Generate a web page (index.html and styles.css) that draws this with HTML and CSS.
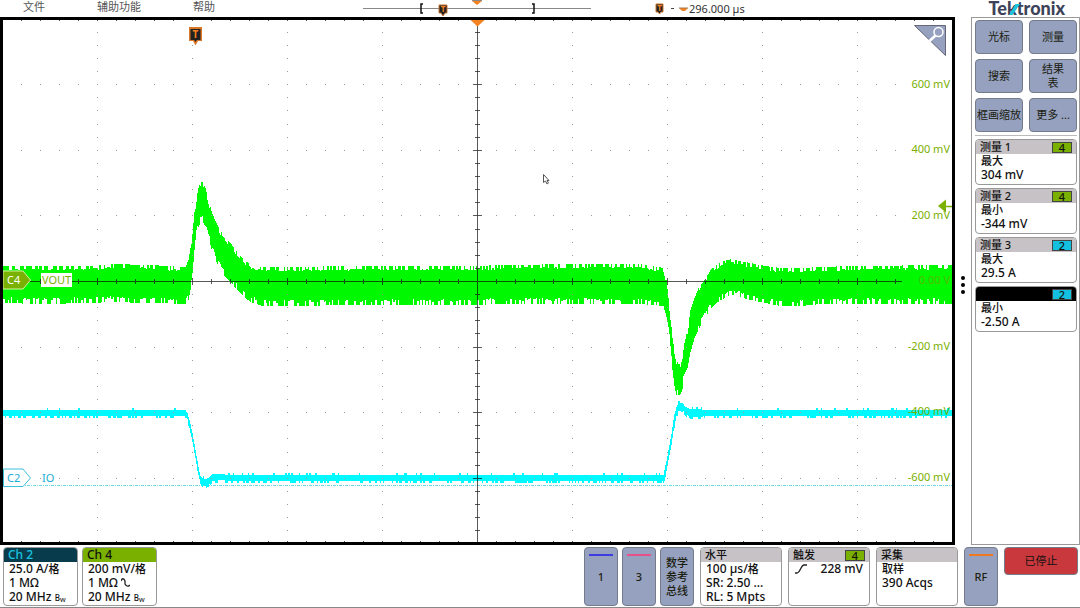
FILE: index.html
```html
<!DOCTYPE html>
<html lang="zh-CN">
<head>
<meta charset="utf-8">
<title>Tektronix</title>
<link rel="stylesheet" href="styles.css">
</head>
<body>
<div class="scope">
  <header class="topbar">
    <nav class="menu">
      <a href="#file">文件</a>
      <a href="#utility">辅助功能</a>
      <a href="#help">帮助</a>
    </nav>
    <svg class="ruler" width="229" height="17" viewBox="0 0 229 17" aria-hidden="true">
      <path d="M0 8.500H228" stroke="#888" fill="none"/>
      <path d="M60 4h-2v9h2M169 4h2v9h-2" stroke="#111" stroke-width="1.500" fill="none"/>
      <path d="M109 1h10l-5 4z" fill="#f58220"/><path d="M109 0.500h10" stroke="#888"/>
      <path d="M76 5h8v8h-2l-2 3-2-3h-2z" fill="#222" stroke="#c87533"/>
      <text x="80" y="12" class="tmark small">T</text>
    </svg>
    <div class="position">
      <svg width="34" height="17" viewBox="0 0 34 17" aria-hidden="true">
        <path d="M1 4h7v8h-2l-1.500 2-1.500-2h-2z" fill="#222" stroke="#c87533"/>
        <text x="4.500" y="11" class="tmark small">T</text>
        <path d="M16 8.500h3" stroke="#444"/>
        <path d="M24 8h9l-3 3h-3z" fill="#f58220"/><path d="M24 8h9" stroke="#a87850"/>
      </svg>
      <span>296.000 µs</span>
    </div>
    <div class="logo">Te<span class="logo-k">k<svg width="11" height="14" viewBox="0 0 11 14" aria-hidden="true"><path d="M0 14L6.500 3H11L3.500 14z" fill="#1cc3dc"/></svg></span>tronix</div>
  </header>

  <main class="screen">
    <svg class="traces" viewBox="3 20 949 522" preserveAspectRatio="none" aria-label="VOUT, IO">
      <path d="M3 485.500H952" class="baseline"/>
      <path id="trace4" class="trace4"/>
      <path id="trace2" class="trace2"/>
      <path id="dots" class="dots"/>
      <path id="axes" class="axes"/>
      <path d="M470.500 20h14l-7 6.500z" fill="#f58220"/>
      <path d="M189 27h13v14H198l-2.500 4.500-2.500-4.500H189z" fill="#d87828"/>
      <path d="M190.500 29h10v11h-10z" fill="#222"/><path d="M193.500 39h4l-2 3z" fill="#222"/>
      <text x="195.500" y="38" class="tmark">T</text>
      <path d="M938 206l8-6.500v13z" fill="#7ab000"/><path d="M946 206.500h6" stroke="#7ab000" stroke-width="1.500"/>
      <path d="M543.500 174.500v8l2-1.500 1.500 3 1.500-1-1.500-2.500h2z" fill="#fff" stroke="#555" stroke-width="1"/>
    </svg>
    <div class="scale">
      <span>600 mV</span><span>400 mV</span><span>200 mV</span><span class="zero">0.00 V</span><span>-200 mV</span><span>-400 mV</span><span>-600 mV</span>
    </div>
    <div class="channel channel4">
      <svg width="28" height="20" viewBox="0 0 28 20" aria-hidden="true"><path d="M0 1H20L27.500 10L20 19H0z" fill="#7ab000" stroke="#d9f0a0"/></svg>
      <b>C4</b><span>VOUT</span>
    </div>
    <div class="channel channel2">
      <svg width="28" height="20" viewBox="0 0 28 20" aria-hidden="true"><path d="M.5 1H20L27.500 10L20 18.500H.5z" fill="#fff" stroke="#3cc0dc"/></svg>
      <b>C2</b><span>IO</span>
    </div>
    <button class="magnify" aria-label="缩放">
      <svg width="32" height="31" viewBox="0 0 32 31"><path d="M.5.500h31v30z" fill="#95a1bf" stroke="#667"/><circle cx="24.500" cy="7" r="4.500" fill="none" stroke="#fff" stroke-width="1.500"/><path d="M21.500 10.500l-6 5.500" stroke="#fff" stroke-width="2.500"/></svg>
    </button>
  </main>

  <div class="grip" aria-hidden="true"><i></i><i></i><i></i></div>

  <aside class="side">
    <div class="tools">
      <button>光标</button><button>测量</button>
      <button>搜索</button><button>结果<br>表</button>
      <button>框画缩放</button><button>更多 ...</button>
    </div>
    <section class="card"><h2>测量 1<span class="badge green">4</span></h2><p><span class="cjk">最大</span></p><p>304 mV</p></section>
    <section class="card"><h2>测量 2<span class="badge green">4</span></h2><p><span class="cjk">最小</span></p><p>-344 mV</p></section>
    <section class="card"><h2>测量 3<span class="badge cyan">2</span></h2><p><span class="cjk">最大</span></p><p>29.5 A</p></section>
    <section class="card"><h2 class="selected"><span class="badge cyan">2</span></h2><p><span class="cjk">最小</span></p><p>-2.50 A</p></section>
  </aside>

  <footer class="bottom">
    <section class="card info ch2"><h2>Ch 2</h2><p>25.0 A/<span class="cjk">格</span></p><p>1 MΩ</p><p>20 MHz <small>B<sub>W</sub></small></p></section>
    <section class="card info ch4"><h2>Ch 4</h2><p>200 mV/<span class="cjk">格</span></p><p>1 MΩ <svg width="9" height="9" viewBox="0 0 9 9" aria-hidden="true"><path d="M0 3C1 0 3 0 4 3V6C5 8 7 9 9 7" fill="none" stroke="#222" stroke-width="1.300"/></svg></p><p>20 MHz <small>B<sub>W</sub></small></p></section>
    <div class="spacer"></div>
    <button class="key key1"><i></i>1</button>
    <button class="key key3"><i></i>3</button>
    <button class="key math">数学<br>参考<br>总线</button>
    <section class="card info setting"><h2>水平</h2><p>100 µs/<span class="cjk">格</span></p><p>SR: 2.50 ...</p><p>RL: 5 Mpts</p></section>
    <section class="card info setting"><h2>触发<span class="badge green">4</span></h2><p class="trigger"><svg width="14" height="10" viewBox="0 0 14 10" aria-hidden="true"><path d="M1 9H3C6 9 7 1 10 1H13" fill="none" stroke="#222" stroke-width="1.300"/></svg>228 mV</p></section>
    <section class="card info setting"><h2>采集</h2><p><span class="cjk">取样</span></p><p>390 Acqs</p></section>
    <button class="key rf"><i></i>RF</button>
    <button class="stop">已停止</button>
  </footer>
</div>
<script src="scope.js"></script>
</body>
</html>
```

FILE: styles.css
```css
* { box-sizing: border-box; }
body {
  margin: 0;
  background: #fff;
  color: #111;
  font: 11px/14px "Noto Sans", "Noto Sans CJK SC", sans-serif;
}
h2, p { margin: 0; }
button { font: inherit; color: #1c2010; cursor: pointer; }
.scope {
  display: grid;
  grid-template: 17px minmax(0, 1fr) 63px / minmax(0, 1fr) 16px 109px;
  min-height: 100vh;
}
.topbar {
  grid-column: 1 / -1;
  display: grid;
  grid-template-columns: 363fr 292fr 425fr;
  position: relative;
  height: 17px;
}
.menu { display: flex; gap: 52px; padding-left: 23px; }
.menu a { color: #555; text-decoration: none; }
.position { display: flex; color: #333; line-height: 18px; }
.logo {
  position: absolute;
  right: 15px;
  top: 0;
  color: #3c4358;
  font: 900 18px/17px Lato, sans-serif;
}
.logo-k { position: relative; }
.logo-k svg { position: absolute; left: 2px; top: 4px; }
.tmark { fill: #f58220; font-size: 10px; font-weight: bold; text-anchor: middle; }
.tmark.small { font-size: 8px; }

.screen { position: relative; border: 3px solid #000; min-width: 0; }
.traces { position: absolute; inset: 0; width: 100%; height: 100%; }
.trace4 { stroke: #00f800; fill: none; shape-rendering: crispEdges; }
.trace2 { stroke: #00f8ff; fill: none; shape-rendering: crispEdges; }
.baseline { stroke: #70d8e4; stroke-dasharray: 3 1 1 1; fill: none; }
.dots { stroke: #999; fill: none; shape-rendering: crispEdges; }
.axes { stroke: #000; stroke-opacity: 0.65; fill: none; shape-rendering: crispEdges; }
.scale {
  position: absolute;
  right: 2px;
  top: calc(12.4% - 8px);
  bottom: calc(12.3% - 6px);
  display: flex;
  flex-direction: column;
  justify-content: space-between;
  text-align: right;
  color: #7ab000;
}
.scale .zero { color: #54bc00; }
.channel { position: absolute; left: 0; display: flex; align-items: center; gap: 10px; }
.channel b { position: absolute; left: 4px; font-weight: normal; }
.channel span { background: #fff; padding: 0 1px; line-height: 14px; }
.channel4 { top: calc(50% - 11px); color: #7ab000; }
.channel4 b { color: #fff; }
.channel2 { top: calc(87.7% - 10px); color: #18acd4; }
.magnify { position: absolute; right: 6px; top: 5px; border: 0; padding: 0; background: none; display: flex; }

.grip { display: flex; flex-direction: column; align-items: center; justify-content: center; gap: 3px; padding-top: 8px; }
.grip i { width: 4px; height: 4px; border-radius: 50%; background: #000; }

.side {
  border: 1px solid #999;
  padding: 2px 2px 0 3px;
  display: flex;
  flex-direction: column;
  gap: 3px;
}
.tools {
  display: grid;
  grid-template-columns: 1fr 1fr;
  grid-auto-rows: 34px;
  gap: 5px 6px;
  padding-bottom: 3px;
  border-bottom: 1px solid #bbb;
}
.tools button, .key, .stop {
  background: #95a1bf;
  border: 1px solid #747c8c;
  border-radius: 4px;
  padding: 0;
  line-height: 14px;
}
.card {
  border: 1px solid #999;
  border-radius: 4px;
  overflow: hidden;
  height: 46px;
  font-size: 12px;
  font-weight: 500;
  color: #111;
}
.card h2 {
  display: flex;
  align-items: center;
  justify-content: space-between;
  height: 14px;
  padding: 0 4px;
  background: #c6c2c6;
  font-size: 11px;
  line-height: 14px;
  font-weight: 500;
}
.card .selected { background: #000; justify-content: flex-end; }
.card p { padding-left: 5px; line-height: 14px; white-space: nowrap; }
.cjk { font-size: 11px; }
.badge { width: 20px; height: 11px; border: 1px solid #444; text-align: center; line-height: 9px; }
.green { background: #7ab000; }
.cyan { background: #14c0e0; }

.bottom {
  grid-column: 1 / -1;
  display: flex;
  gap: 4px;
  padding: 2px 2px 2px 3px;
  border-bottom: 1px solid #888;
}
.spacer { flex: 1; }
.info { height: 59px; width: 75px; }
.info h2 { font-size: 12px; }
.info.ch2 h2 { background: #083c4c; color: #18c4e0; }
.info.ch4 h2 { background: #7ab000; }
.info small { font-size: 8px; }
.info sub { font-size: 6px; vertical-align: -1px; }
.info.setting { width: 82px; margin-left: 2px; }
.setting h2 { font-size: 11px; }
.trigger { display: flex; align-items: center; justify-content: space-between; padding-right: 6px; }
.key { width: 34px; height: 59px; position: relative; font-weight: 500; }
.key i { position: absolute; left: 4px; right: 4px; top: 6px; height: 2px; background: #3c3ce0; }
.key3 i { background: #e8508c; }
.rf { margin-left: 2px; }
.rf i { background: #f07820; }
.stop { width: 74px; height: 28px; margin-left: 2px; background: #c8383c; color: #111; }
```

FILE: scope.js
```js
// Envelopes: [x, upper edge, lower edge]
const vout = [
  [3,268,301],[40,268,302],[90,268,301],[110,266,300],[150,267,301],[185,269,302],
  [188,262,298],[190,250,288],[192,236,274],[194,214,252],[196,200,232],[198,190,225],
  [200,184,221],[202,184,220],[205,190,224],[208,202,236],[211,213,247],[215,223,258],
  [220,233,268],[225,239,275],[230,245,280],[235,252,286],[240,258,291],[245,263,296],
  [250,266,300],[262,269,304],[290,269,304],[350,268,303],[477,268,303],[500,267,302],
  [580,266,302],[640,266,302],[663,270,304],[666,282,315],[668,300,325],[670,318,348],
  [672,340,368],[674,352,384],[676,362,393],[678,366,393],[680,365,392],[682,358,387],
  [684,345,372],[687,332,366],[690,312,350],[694,300,336],[698,290,328],[702,285,320],
  [706,279,313],[710,272,307],[715,268,302],[720,264,298],[726,262,295],[732,261,293],
  [740,263,295],[750,265,298],[765,268,301],[780,270,304],[800,270,304],[820,269,302],
  [850,268,302],[952,267,302]
];
const io = [
  [3,410,416],[185,410,416],[187,413,419],[189,420,428],[192,433,442],[195,450,458],
  [198,467,475],[200,476,482],[202,478,485],[205,479,486],[208,478,485],[212,474,481],
  [222,474,480],[228,475,481],[663,475,481],[665,465,477],[666,461,471],[668,450,460],
  [671,434,445],[673,420,431],[676,407,416],[678,403,411],[682,403,410],[685,407,414],
  [690,409,417],[698,409,417],[706,410,416],[952,410,416]
];

let seed = 7;
function random() {
  seed = (seed * 1103515245 + 12345) % 2147483648;
  return seed / 2147483648;
}

function edges(points, x) {
  let i = 1;
  while (points[i][0] < x) i++;
  const a = points[i - 1], b = points[i];
  const t = (x - a[0]) / (b[0] - a[0]);
  return [a[1] + (b[1] - a[1]) * t, a[2] + (b[2] - a[2]) * t];
}

function trace(points, noise) {
  let d = "";
  let up = 0, down = 0;
  for (let x = 3; x < 952; x++) {
    const [top, bottom] = edges(points, x);
    if (x % 3 !== 1) [up, down] = noise();
    d += `M${x + 0.5} ${Math.round(top - up)}V${Math.round(bottom + down)}`;
  }
  return d;
}

document.getElementById("trace4").setAttribute("d",
  trace(vout, () => [random() > 0.45 ? 2 : random() * 2 - 2.5, random() > 0.45 ? 2 : random() * 3 - 4]));
document.getElementById("trace2").setAttribute("d",
  trace(io, () => [random() > 0.88 ? 2 : 0, random() > 0.65 ? 2 : 0]));

const rowHeight = 65.6, centerX = 477, centerY = 281;
let dots = "", axes = `M${centerX}.5 20V542M3 ${centerY}.5H902`;
for (let column = 1; column < 10; column++) {
  const x = 2 + column * 95;
  for (let k = -19; k < 20; k++) dots += `M${x} ${Math.round(centerY + k * rowHeight / 5) + 0.5}h1`;
}
for (let row = -3; row < 4; row++) {
  const y = Math.round(centerY + row * rowHeight) + 0.5;
  for (let x = 21; x < 902; x += 19) dots += `M${x} ${y}h1`;
}
for (let x = 21; x < 902; x += 19) {
  const size = (x - 2) % 95 === 0 ? 3 : 2;
  axes += `M${x + 0.5} ${centerY - size}v${size * 2 + 1}`;
}
for (let x = 21; x < 952; x += 19) axes += `M${x + 0.5} 20v1M${x + 0.5} 541v1`;
for (let k = -19; k < 20; k++) {
  const y = Math.round(centerY + k * rowHeight / 5) + 0.5;
  const size = k % 5 === 0 ? 4 : 2;
  axes += `M${centerX - size} ${y}h${size * 2 + 1}`;
}
document.getElementById("dots").setAttribute("d", dots);
document.getElementById("axes").setAttribute("d", axes);
```
